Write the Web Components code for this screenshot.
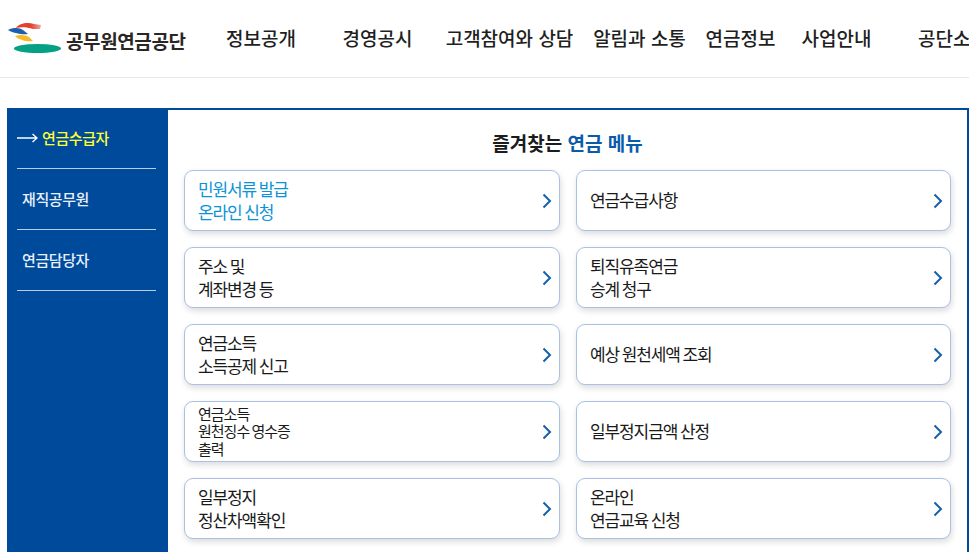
<!DOCTYPE html>
<html lang="ko">
<head>
<meta charset="utf-8">
<title>공무원연금공단</title>
<style>
html, body { margin: 0; padding: 0; height: 552px; overflow: hidden; background: #fff; }
body { font-family: "Noto Sans CJK KR", "Noto Sans", sans-serif; color: #222; }
</style>
</head>
<body>
<site-header></site-header>
<pension-panel>
  <side-link slot="side" active>연금수급자</side-link>
  <side-link slot="side">재직공무원</side-link>
  <side-link slot="side">연금담당자</side-link>
  <menu-card accent>민원서류 발급<br>온라인 신청</menu-card>
  <menu-card>연금수급사항</menu-card>
  <menu-card>주소 및<br>계좌변경 등</menu-card>
  <menu-card>퇴직유족연금<br>승계 청구</menu-card>
  <menu-card>연금소득<br>소득공제 신고</menu-card>
  <menu-card>예상 원천세액 조회</menu-card>
  <menu-card small>연금소득<br>원천징수 영수증<br>출력</menu-card>
  <menu-card>일부정지금액 산정</menu-card>
  <menu-card>일부정지<br>정산차액확인</menu-card>
  <menu-card>온라인<br>연금교육 신청</menu-card>
</pension-panel>

<script>
const headerTemplate = document.createElement('template');
headerTemplate.innerHTML = `
<style>
:host {
  display: flex;
  align-items: center;
  height: 77px;
  border-bottom: 1px solid #e8e8e8;
  overflow: hidden;
}
#logo {
  display: flex;
  align-items: center;
  width: 203px;
  flex: none;
  padding-left: 8px;
  box-sizing: border-box;
}
#logo svg { width: 54px; height: 32px; flex: none; margin-top: -1px; }
#logo span {
  font-size: 19px;
  font-weight: 700;
  letter-spacing: -0.4px;
  color: #2b2626;
  margin: 4px 0 0 4px;
  white-space: nowrap;
}
nav {
  display: grid;
  grid-template-columns: 116px 117px 147px 113px 89px 103px 130px;
  flex: none;
  margin-top: -3px;
}
nav a {
  text-align: center;
  font-size: 19px;
  font-weight: 500;
  color: #1f1f1f;
  white-space: nowrap;
}
</style>
<div id="logo">
  <svg viewBox="0 0 54 32">
    <defs>
      <linearGradient id="red"><stop offset="0.6" stop-color="#e2412f"/><stop offset="1" stop-color="#f0a8a0"/></linearGradient>
    </defs>
    <path d="M8 6C11 1 20 0 26 2L33 3 32 7 25 7C19 5 13 5 8 6Z" fill="url(#red)"/>
    <path d="M0 8C6 5 12 6 15 8L20 12C14 13 5 11 0 8Z" fill="#1d5eb0"/>
    <path d="M7 14C12 12 18 13 21 15L25 19C19 20 11 18 7 14Z" fill="#f6bb22"/>
    <ellipse cx="29.5" cy="26.5" rx="23.5" ry="4.5" fill="#05a184"/>
  </svg>
  <span>공무원연금공단</span>
</div>
<nav>
  <a>정보공개</a><a>경영공시</a><a>고객참여와 상담</a><a>알림과 소통</a><a>연금정보</a><a>사업안내</a><a>공단소개</a>
</nav>
`;

class SiteHeader extends HTMLElement {
  constructor() {
    super();
    this.attachShadow({mode: 'open'});
    this.shadowRoot.appendChild(headerTemplate.content.cloneNode(true));
  }
}

const panelTemplate = document.createElement('template');
panelTemplate.innerHTML = `
<style>
:host {
  display: flex;
  box-sizing: border-box;
  width: 962px;
  margin: 30px 0 0 7px;
  border-top: 2px solid #004a9c;
  border-right: 2px solid #004a9c;
  height: 444px;
}
aside {
  flex: none;
  width: 161px;
  background: #004a9c;
  padding: 0 12px 0 10px;
  box-sizing: border-box;
}
main {
  flex: 1;
  padding: 0 16px 0 16px;
  min-width: 0;
}
h2 {
  margin: 0;
  height: 60px;
  padding-top: 19px;
  box-sizing: border-box;
  text-align: center;
  font-size: 19px;
  line-height: 28px;
  font-weight: 700;
  color: #1c1c1c;
}
h2 span { color: #0a5cab; }
#grid {
  display: grid;
  grid-template-columns: 376px 375px;
  grid-auto-rows: 61px;
  gap: 16px;
}
</style>
<aside><slot name="side"></slot></aside>
<main>
  <h2>즐겨찾는 <span>연금 메뉴</span></h2>
  <div id="grid"><slot></slot></div>
</main>
`;

class PensionPanel extends HTMLElement {
  constructor() {
    super();
    this.attachShadow({mode: 'open'});
    this.shadowRoot.appendChild(panelTemplate.content.cloneNode(true));
  }
}

const sideTemplate = document.createElement('template');
sideTemplate.innerHTML = `
<style>
:host {
  display: flex;
  align-items: center;
  height: 61px;
  box-sizing: border-box;
  border-bottom: 1px solid #b9cde6;
  padding-left: 5px;
  padding-bottom: 1px;
  font-size: 15px;
  font-weight: 500;
  letter-spacing: -0.4px;
  color: #e9f0f9;
}
:host([active]) {
  height: 59px;
  color: #ffff2e;
  font-weight: 500;
  padding-left: 0;
  padding-bottom: 4px;
}
svg { display: none; width: 21px; height: 10px; margin: 1px 4px 0 0; flex: none; }
:host([active]) svg { display: block; }
</style>
<svg viewBox="0 0 21 10"><path d="M0 5H20M15.5 1L20 5 15.5 9" fill="none" stroke="#fff" stroke-width="1.3"/></svg>
<slot></slot>
`;

class SideLink extends HTMLElement {
  constructor() {
    super();
    this.attachShadow({mode: 'open'});
    this.shadowRoot.appendChild(sideTemplate.content.cloneNode(true));
  }
}

const cardTemplate = document.createElement('template');
cardTemplate.innerHTML = `
<style>
:host {
  display: flex;
  align-items: center;
  justify-content: space-between;
  box-sizing: border-box;
  height: 61px;
  padding: 0 7px 2px 13px;
  border: 1px solid #a9c1e3;
  border-radius: 9px;
  background: #fff;
  box-shadow: 1px 3px 6px rgba(0, 0, 0, 0.14);
  font-size: 17px;
  line-height: 23px;
  letter-spacing: -1.1px;
  word-spacing: -1px;
  color: #1a1a1a;
}
:host([accent]) { color: #0b93d6; }
:host([small]) { font-size: 15px; line-height: 17.5px; letter-spacing: -1px; padding-bottom: 1px; }
svg { width: 10px; height: 16px; flex: none; margin-top: 2px; }
</style>
<div><slot></slot></div>
<svg viewBox="0 0 10 16"><path d="M1.5 1.5L8 8 1.5 14.5" fill="none" stroke="#1560a8" stroke-width="2"/></svg>
`;

class MenuCard extends HTMLElement {
  constructor() {
    super();
    this.attachShadow({mode: 'open'});
    this.shadowRoot.appendChild(cardTemplate.content.cloneNode(true));
  }
}

window.customElements.define('site-header', SiteHeader);
window.customElements.define('pension-panel', PensionPanel);
window.customElements.define('side-link', SideLink);
window.customElements.define('menu-card', MenuCard);
</script>
</body>
</html>
